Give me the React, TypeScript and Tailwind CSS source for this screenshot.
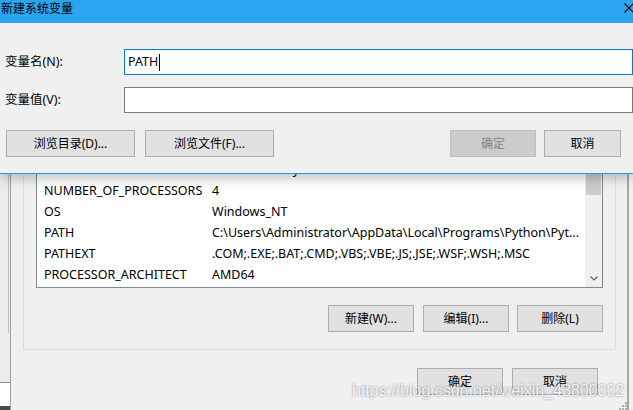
import React from "react";

const rows: [string, string][] = [
  ["DriverData", "C:\\Windows\\System32\\Drivers\\DriverData"],
  ["NUMBER_OF_PROCESSORS", "4"],
  ["OS", "Windows_NT"],
  ["PATH", "C:\\Users\\Administrator\\AppData\\Local\\Programs\\Python\\Pyt..."],
  ["PATHEXT", ".COM;.EXE;.BAT;.CMD;.VBS;.VBE;.JS;.JSE;.WSF;.WSH;.MSC"],
  ["PROCESSOR_ARCHITECT", "AMD64"],
];

function Btn({ children, className = "" }: { children: React.ReactNode; className?: string }) {
  return (
    <div
      className={`flex h-[27px] items-center justify-center border border-[#adadad] bg-[#e1e1e1] text-[12px] text-black ${className}`}
    >
      {children}
    </div>
  );
}

function NewVarDialog() {
  return (
    <div className="absolute left-0 top-0 z-10 flex h-[174px] w-[633px] flex-col border-b border-[#1e9be9] bg-[#f0f0f0] shadow-[0_4px_12px_rgba(0,0,0,0.25)]">
      <div className="flex h-[23px] items-start justify-between bg-[#2ba5ee] pl-[1px] pt-[2px]">
        <span className="text-[12px] leading-[14px] text-black">新建系统变量</span>
        <svg width="10" height="10" viewBox="0 0 10 10" className="mr-[-1px] mt-[1px]">
          <path d="M0.5 0.5L9.5 9.5M9.5 0.5L0.5 9.5" stroke="#000" strokeWidth="1.1" fill="none" />
        </svg>
      </div>

      <div className="flex flex-col pt-[26px]">
        <div className="flex items-center pl-[5px]">
          <span className="w-[119px] text-[12.5px]">变量名(N):</span>
          <div className="flex h-[26px] w-[509px] items-center border border-[#0078d7] bg-white pl-[3px] text-[12.5px]">
            PATH
            <span className="ml-[1px] inline-block h-[17px] w-px bg-black" />
          </div>
        </div>

        <div className="mt-[12px] flex items-center pl-[5px]">
          <span className="w-[119px] text-[12.5px]">变量值(V):</span>
          <div className="h-[26px] w-[509px] border border-[#7a7a7a] bg-white" />
        </div>

        <div className="mt-[17px] flex items-center pl-[6px] pr-[12px]">
          <Btn className="w-[129px]">浏览目录(D)...</Btn>
          <Btn className="ml-[10px] w-[129px]">浏览文件(F)...</Btn>
          <div className="ml-auto flex h-[27px] w-[86px] items-center justify-center border border-[#bfbfbf] bg-[#cccccc] text-[12px] text-[#838383]">
            确定
          </div>
          <Btn className="ml-[8px] w-[77px]">取消</Btn>
        </div>
      </div>
    </div>
  );
}

function VarList() {
  return (
    <div className="flex min-h-0 flex-1 overflow-hidden border border-[#828790] bg-white">
      <div className="flex min-w-0 flex-1 flex-col justify-end pb-[1px]">
        {rows.map(([name, value]) => (
          <div key={name} className="flex h-[21px] shrink-0 items-center whitespace-nowrap pl-[7px] text-[12.5px]">
            <span className="w-[168px] shrink-0">{name}</span>
            <span>{value}</span>
          </div>
        ))}
      </div>
      <div className="flex w-[17px] shrink-0 flex-col justify-end bg-[#f0f0f0]">
        <div className="mx-[1px] h-[60px] bg-[#cdcdcd]" />
        <div className="h-[75px]" />
        <div className="flex h-[17px] items-center justify-center">
          <svg width="8" height="5" viewBox="0 0 8 5">
            <path d="M0.5 0.5L4 4L7.5 0.5" stroke="#606060" strokeWidth="1.2" fill="none" />
          </svg>
        </div>
      </div>
    </div>
  );
}

export default function App() {
  return (
    <div className="relative flex h-[410px] w-[633px] overflow-hidden bg-[#f0f0f0] font-['Noto_Sans','Noto_Sans_CJK_SC',sans-serif] text-black">
      <div className="flex w-[10px] flex-col">
        <div className="h-[383px] border-b border-[#8a8a8a] bg-[#ececec]">
          <div className="h-[333px] w-[9px] border-r border-[#c2c2c2]" />
        </div>
        <div className="flex-1 bg-white" />
        <div className="h-[4px] bg-[#4a4a4a]" />
      </div>

      <div className="relative flex w-[619px] flex-col border-l border-r-2 border-l-[#a0a0a0] border-r-[#a8a8a8] pb-[15px] pl-[12px] pr-[11px]">
        <div className="flex min-h-0 flex-1 flex-col border border-[#dcdcdc] px-[12px] pb-[17px] pt-[30px]">
          <VarList />
          <div className="mt-[17px] flex justify-end gap-[8px]">
            <Btn className="mr-[1px] w-[86px]">新建(W)...</Btn>
            <Btn className="w-[86px]">编辑(I)...</Btn>
            <Btn className="w-[86px]">删除(L)</Btn>
          </div>
        </div>
        <div className="mt-[18px] flex justify-end gap-[9px] pr-[18px]">
          <Btn className="w-[86px]">确定</Btn>
          <Btn className="w-[86px]">取消</Btn>
        </div>
        <svg width="10" height="10" viewBox="0 0 10 10" className="absolute bottom-0 right-0">
          <g fill="#b0b0b0">
            <rect x="8" y="2" width="2" height="2" />
            <rect x="5" y="5" width="2" height="2" />
            <rect x="8" y="5" width="2" height="2" />
            <rect x="2" y="8" width="2" height="2" />
            <rect x="5" y="8" width="2" height="2" />
            <rect x="8" y="8" width="2" height="2" />
          </g>
        </svg>
      </div>

      <div className="flex-1 bg-[#f0f0f0]" />

      <NewVarDialog />

      <div className="pointer-events-none absolute left-[352px] top-[379px] z-20 whitespace-nowrap font-['Liberation_Sans',sans-serif] text-[16px] text-white/90 [text-shadow:0_0_2px_rgba(0,0,0,0.55)]">
        https://blog.csdn.net/weixin_43800002
      </div>
    </div>
  );
}
